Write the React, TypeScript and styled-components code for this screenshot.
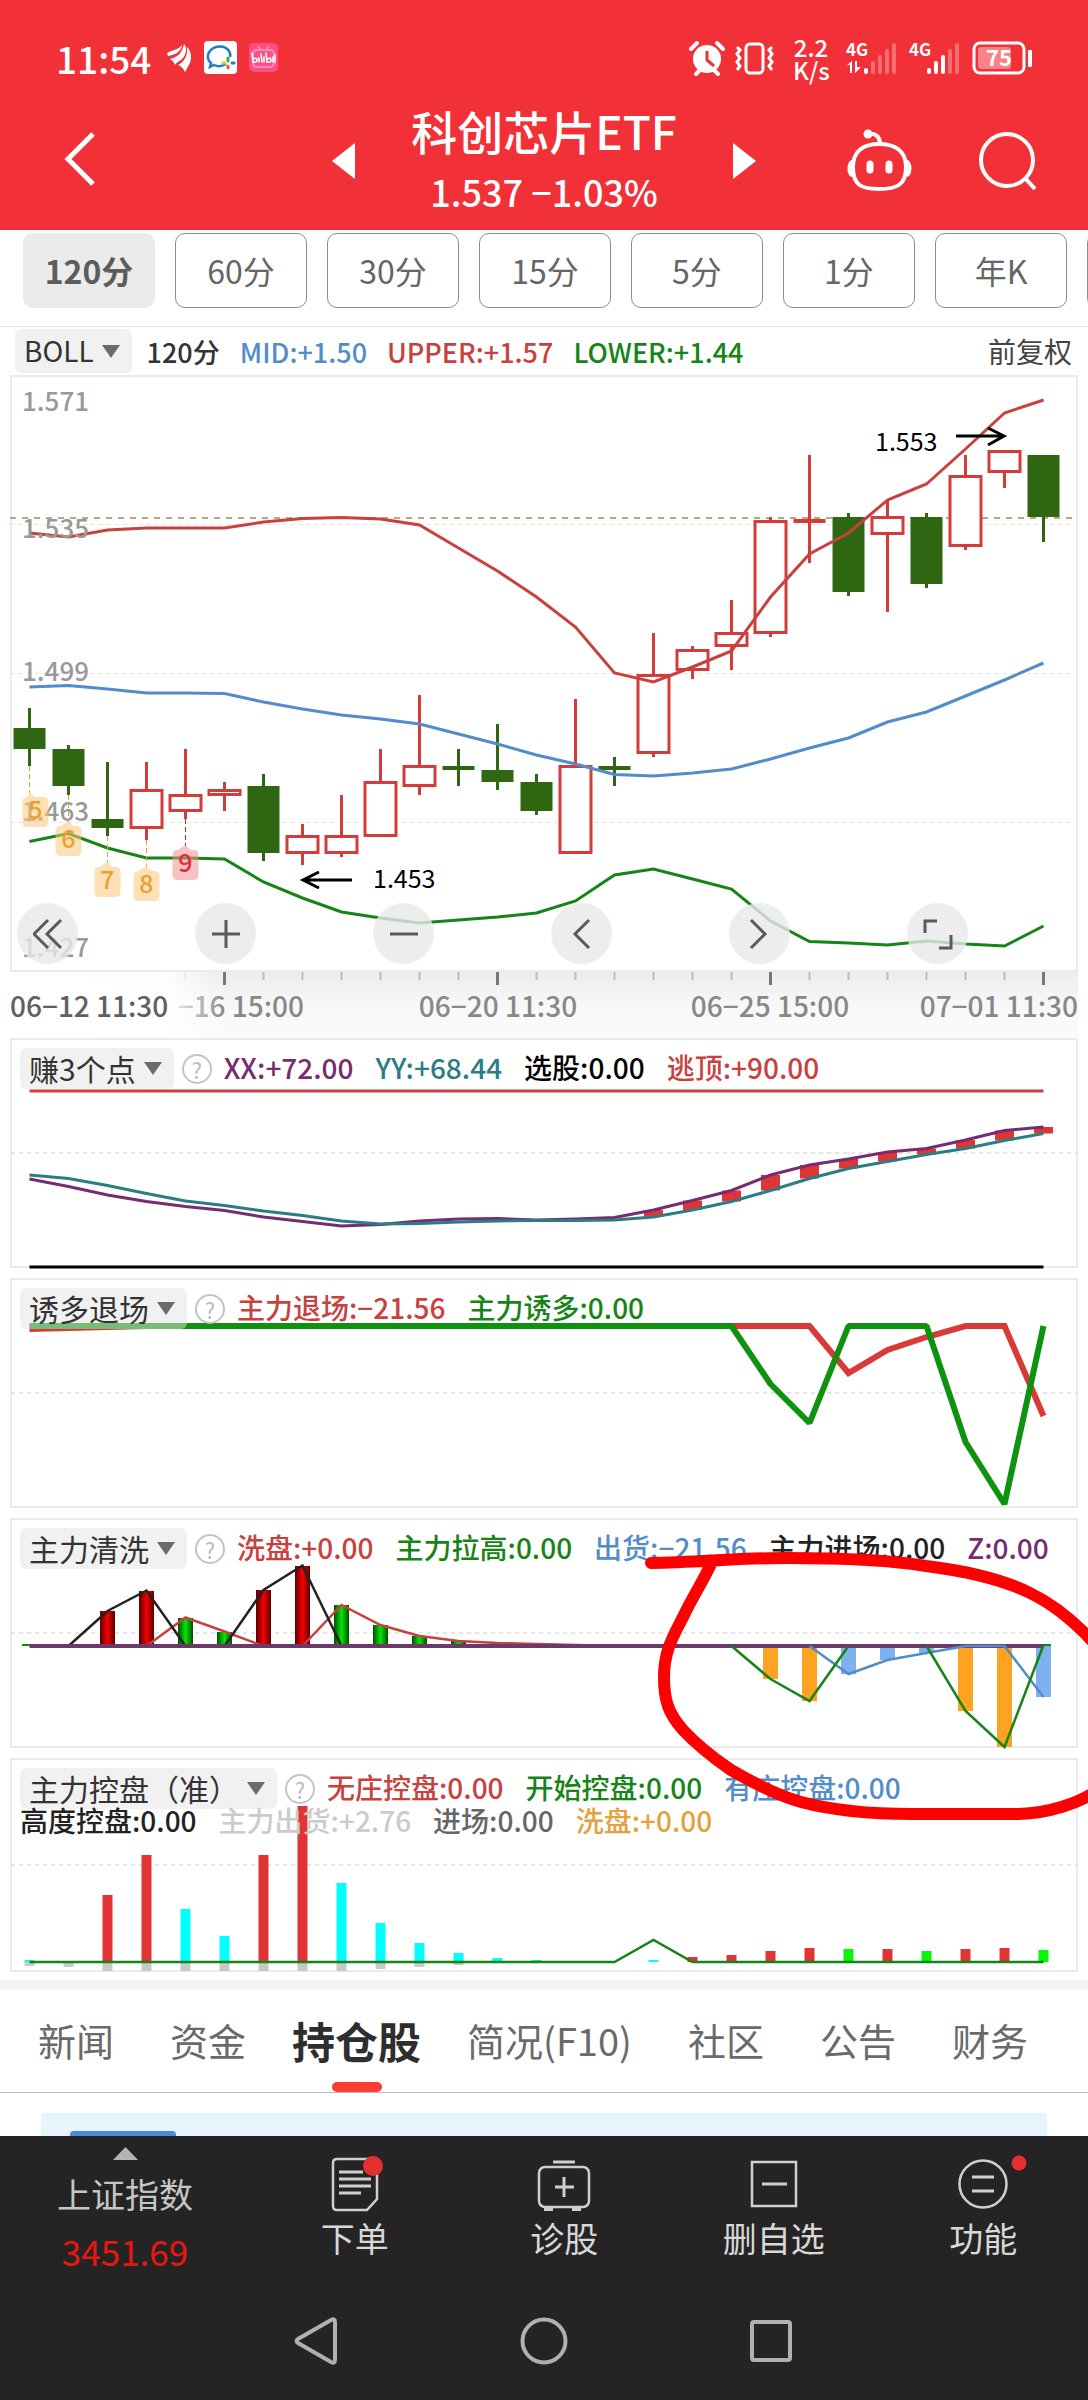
import React from "react";
import styled, { createGlobalStyle } from "styled-components";

const GlobalStyle = createGlobalStyle`
  * { box-sizing: border-box; }
  body {
    margin: 0;
    background: #fff;
    font-family: "Noto Sans CJK SC", "Noto Sans", sans-serif;
    overflow-x: hidden;
  }
  button, select {
    font: inherit;
    color: inherit;
    border: 0;
    margin: 0;
    padding: 0;
    background: none;
  }
  svg { display: block; }
`;

const color = {
  brand: "#f23038",
  red: "#c8413f",
  up: "#d23c3a",
  down: "#2f6612",
  green: "#168416",
  blue: "#528dca",
  purple: "#762c70",
  teal: "#2b7d83",
  orange: "#e5a23c",
  frame: "#ebebeb",
  grid: "#e4e4e4",
  dark: "#242424",
};

/* ---------- header ---------- */

const Header = styled.header`
  background: ${color.brand};
  color: #fff;
`;

const StatusBar = styled.div`
  display: flex;
  justify-content: space-between;
  align-items: center;
  height: 100px;
  padding: 15px 55px 0 56px;
`;

const StatusGroup = styled.div<{ $gap: number }>`
  display: flex;
  align-items: center;
  gap: ${(p) => p.$gap}px;
  svg { overflow: visible; }
`;

const Clock = styled.span`
  font-size: 37px;
  line-height: 40px;
  font-weight: 500;
  margin-right: 4px;
`;

const Speed = styled.span`
  width: 36px;
  margin: 0 6px 0 8px;
  font-size: 24px;
  line-height: 23px;
  font-weight: 500;
  text-align: center;
`;

const NavBar = styled.nav`
  display: grid;
  grid-template-columns: 1fr auto 1fr;
  align-items: center;
  padding: 0 50px 8px;
`;

const IconButton = styled.button`
  display: grid;
  place-items: center;
  cursor: pointer;
`;

const NavStart = styled.div`
  display: flex;
`;

const NavEnd = styled.div`
  display: flex;
  justify-content: flex-end;
  align-items: center;
  gap: 66px;
`;

const Switcher = styled.div`
  display: flex;
  align-items: center;
  gap: 56px;
`;

const TitleBlock = styled.div`
  text-align: center;
`;

const Title = styled.h1`
  margin: 0;
  font-size: 46px;
  line-height: 60px;
  font-weight: 500;
`;

const Quote = styled.div`
  font-size: 36px;
  line-height: 62px;
  font-weight: 500;
`;

/* ---------- periods ---------- */

const Periods = styled.div`
  display: flex;
  gap: 20px;
  padding: 3px 0 18px 23px;
  border-bottom: 1px solid #e2e2e2;
  overflow: hidden;
`;

const Period = styled.button<{ $active?: boolean }>`
  flex: 0 0 132px;
  height: 75px;
  padding-bottom: 2px;
  border: 1px solid ${(p) => (p.$active ? "#ebebeb" : "#8d8d8d")};
  border-radius: 10px;
  background: ${(p) => (p.$active ? "#ebebeb" : "#fff")};
  color: ${(p) => (p.$active ? "#5c5c5c" : "#666")};
  font-size: 32px;
  font-weight: ${(p) => (p.$active ? 700 : 400)};
`;

/* ---------- indicators ---------- */

const IndicatorBar = styled.div`
  display: flex;
  align-items: center;
  height: 48px;
  padding: 0 16px 0 15px;
`;

const Picker = styled.label<{ $tall?: boolean }>`
  display: grid;
  flex: none;
  align-items: center;
  height: ${(p) => (p.$tall ? 44 : 41)}px;
  border-radius: 6px;
  background: rgba(228, 228, 228, 0.5);
  color: #333;
  font-size: ${(p) => (p.$tall ? 28 : 30)}px;
  select {
    grid-area: 1 / 1;
    appearance: none;
    field-sizing: content;
    height: 40px;
    padding: 0 38px 2px 9px;
    line-height: 38px;
    outline: none;
  }
  svg {
    grid-area: 1 / 1;
    justify-self: end;
    margin-right: 12px;
    pointer-events: none;
  }
`;

const Values = styled.div<{ $gap: number }>`
  display: flex;
  flex: 1;
  gap: ${(p) => p.$gap}px;
  font-size: 28px;
  line-height: 35px;
  font-weight: 500;
  white-space: nowrap;
`;

const Value = styled.span<{ $color: string }>`
  color: ${(p) => p.$color};
`;

const Adjust = styled.span`
  color: #444;
  font-size: 28px;
`;

const BollValues = styled(Values)`
  padding-left: 15px;
  font-size: 27px;
`;

/* A bordered chart; the drawing and its legend share one grid cell. */
const Panel = styled.section`
  display: grid;
  margin: 0 10px;
  border: 2px solid ${color.frame};
  > * { grid-area: 1 / 1; min-width: 0; }
`;

const Panels = styled.div`
  position: relative;
  display: grid;
  gap: 10px;
`;

const PanelStack = styled.div`
  display: grid;
  gap: 10px;
`;

const Plot = styled.svg`
  width: 100%;
  height: auto;
  overflow: visible;
`;

const Legend = styled.div`
  z-index: 1;
  padding: 8px 0 0 8px;
`;

const LegendRow = styled.div`
  display: flex;
  align-items: center;
  gap: 8px;
  ${Values} { padding: 0 0 2px 4px; }
`;

const LegendExtra = styled(Values)`
  margin-top: -6px;
`;

const Help = styled.button`
  flex: none;
  width: 30px;
  height: 30px;
  border: 2px solid #c4c4c4;
  border-radius: 50%;
  color: #bdbdbd;
  font-size: 22px;
  line-height: 24px;
  text-align: center;
`;

const ChartTools = styled.div`
  z-index: 1;
  align-self: end;
  display: grid;
  grid-template-columns: repeat(6, 1fr);
  margin: 0 -2px 6px;
`;

const ToolButton = styled.button`
  display: grid;
  place-items: center;
  width: 61px;
  height: 61px;
  margin-left: 7px;
  border-radius: 50%;
  background: rgba(232, 232, 232, 0.8);
`;

const Axis = styled.div`
  margin: 0 10px;
  background: linear-gradient(#ececec, #f8f8f8 50%, #fbfbfb);
`;

const Annotation = styled.svg`
  position: absolute;
  inset: 0;
  width: 100%;
  height: 100%;
  z-index: 2;
  pointer-events: none;
`;

/* ---------- tabs ---------- */

const Tabs = styled.div`
  display: flex;
  margin-top: 8px;
  padding-left: 10px;
  height: 113px;
  border-top: 10px solid #f4f4f4;
  border-bottom: 1px solid #bcbcbc;
  overflow: hidden;
`;

const Tab = styled.button<{ $active?: boolean }>`
  display: grid;
  flex: none;
  grid-template-rows: 1fr 10px;
  place-items: center;
  padding: 0 ${(p) => (p.$active ? 18 : 28)}px;
  color: ${(p) => (p.$active ? "#2e2e2e" : "#6a6a6a")};
  font-size: ${(p) => (p.$active ? 43 : 38)}px;
  line-height: 60px;
  font-weight: ${(p) => (p.$active ? 700 : 400)};
  span { padding-top: 7px; }
  &::after {
    content: "";
    width: 50px;
    height: 10px;
    border-radius: 5px;
    background: ${(p) => (p.$active ? "#fa3c33" : "transparent")};
  }
`;

const Peek = styled.div`
  padding: 20px 41px 0;
`;

const PeekCard = styled.div`
  height: 23px;
  padding: 18px 29px 0;
  border-radius: 3px 3px 0 0;
  background: #e6f4fe;
`;

const PeekTag = styled.div`
  width: 106px;
  height: 5px;
  border-radius: 4px 4px 0 0;
  background: #4a8bd6;
`;

/* ---------- bottom ---------- */

const Footer = styled.footer`
  background: ${color.dark};
`;

const Actions = styled.div`
  display: grid;
  grid-template-columns: 250px repeat(4, 1fr);
  height: 146px;
`;

const IndexButton = styled.button`
  display: flex;
  flex-direction: column;
  align-items: center;
  padding-top: 11px;
  color: #c6c6c6;
  font-size: 34px;
  line-height: 60px;
  svg { margin-bottom: 4px; }
`;

const IndexValue = styled.span`
  color: #e8170f;
  font-size: 35px;
  line-height: 54px;
`;

const Action = styled.button`
  display: flex;
  flex-direction: column;
  align-items: center;
  padding-top: 19px;
  color: #d8d8d8;
  font-size: 34px;
  line-height: 50px;
  svg { overflow: visible; }
`;

const SystemNav = styled.div`
  display: flex;
  justify-content: center;
  align-items: center;
  gap: 179px;
  height: 118px;
`;

/* ---------- data ---------- */

const FIRST_X = 29.5;
const STEP = 39;
const px = (i: number) => FIRST_X + STEP * i;
const points = (ys: number[], from = 0) =>
  ys.map((y, i) => `${px(i + from)},${y}`).join(" ");

type Candle = ["u" | "d", number, number, number, number];
const candles: Candle[] = [
  ["d", 708, 728, 749, 766], ["d", 745, 749, 786, 795], ["d", 762, 819, 828, 836],
  ["u", 762, 789, 829, 840], ["u", 749, 794, 812, 819], ["u", 782, 789, 796, 811],
  ["d", 774, 786, 853, 861], ["u", 824, 835, 854, 865], ["u", 795, 835, 854, 857],
  ["u", 749, 781, 837, 837], ["u", 695, 765, 787, 795], ["d", 749, 766, 770, 786],
  ["d", 724, 770, 782, 790], ["d", 774, 782, 811, 815], ["u", 699, 765, 854, 854],
  ["d", 757, 766, 770, 786], ["u", 633, 674, 754, 757], ["u", 646, 649, 671, 679],
  ["u", 600, 632, 647, 670], ["u", 517, 520, 634, 637], ["u", 455, 519, 523, 563],
  ["d", 513, 517, 592, 596], ["u", 500, 516, 535, 612], ["d", 513, 517, 584, 588],
  ["u", 455, 475, 547, 550], ["u", 450, 450, 473, 488], ["d", 455, 455, 517, 542],
];

const upper = [533, 537, 530, 528, 528, 528, 522, 518.5, 517.5, 519, 525, 548, 571, 597, 627, 673, 682, 667, 651, 597, 554, 533, 500, 484, 449, 413, 400];
const mid = [687, 685.5, 689, 693, 693, 693.5, 702, 709, 715, 719, 724, 734, 744, 755, 764, 774.5, 776, 773, 769, 759, 748, 738, 722, 712, 696, 680, 663];
const lower = [841.5, 833.5, 848, 858, 858, 859, 882, 898, 912, 918, 923, 920, 917, 913, 901, 875, 869, 879, 889, 921, 941.5, 943, 945, 941, 944, 946, 926];

const priceLabels: [string, number][] = [["1.571", 411], ["1.535", 538], ["1.499", 681], ["1.463", 821], ["1.427", 957]];
const countBadges: [string, number, number, number][] = [["5", 0, 797, 6], ["6", 1, 826, 0], ["7", 2, 867, 0], ["8", 3, 871, 0], ["9", 4, 850, 0]];

const xx = [1179, 1186.5, 1195, 1201.5, 1206.5, 1210.5, 1217, 1221.5, 1226, 1224.5, 1221, 1219, 1218.5, 1220, 1219, 1217.5, 1210, 1200.5, 1190.5, 1175, 1165, 1159, 1152, 1148.5, 1140, 1130.5, 1127];
const yy = [1175, 1178.5, 1185.5, 1193.5, 1201, 1205.5, 1211, 1215.5, 1221, 1224, 1223.5, 1222, 1221, 1220.5, 1220.5, 1220, 1217, 1210, 1201.5, 1190.5, 1178.5, 1168.5, 1161.5, 1154.5, 1148.5, 1140.5, 1133.5];

const washBars: [number, number, "r" | "g"][] = [
  [2, 1611, "r"], [3, 1591, "r"], [4, 1618, "g"], [5, 1632, "g"], [6, 1590, "r"],
  [7, 1566, "r"], [8, 1605, "g"], [9, 1625, "g"], [10, 1636, "g"], [11, 1641, "g"],
];
const shipBars: [number, number, string][] = [
  [19, 1679, "#fda321"], [20, 1701, "#fda321"], [24, 1711, "#fda321"], [25, 1747, "#fda321"],
  [21, 1674, "#7fb1f0"], [22, 1660, "#7fb1f0"], [23, 1653, "#7fb1f0"], [26, 1697, "#7fb1f0"],
];

const R = "#e23434", C = "#00ffff", G = "#06f806";
const controlBars: [number, number, string][] = [
  [0, 1960, C], [2, 1895, R], [3, 1855, R], [4, 1909, C], [5, 1936, C], [6, 1855, R], [7, 1806, R],
  [8, 1883, C], [9, 1923, C], [10, 1943, C], [11, 1953, C], [12, 1958, C], [13, 1960, C], [16, 1960, C],
  [17, 1957, R], [18, 1955, R], [19, 1951, R], [20, 1948, R], [21, 1949, G], [22, 1949, R],
  [23, 1951, G], [24, 1949, R], [25, 1948, R], [26, 1950, G],
];
const greyBars = [1966, 1967, 1971, 1971, 1971, 1971, 1971, 1971, 1971, 1969, 1967, 1965];

/* ---------- parts ---------- */

const GridLine = ({ y, w = 2 }: { y: number; w?: number }) => (
  <line x1="11" x2="1077" y1={y} y2={y} stroke={color.grid} strokeWidth={w} strokeDasharray="4 4" />
);

const Series = ({ ys, stroke, w = 3, from = 0 }: { ys: number[]; stroke: string; w?: number; from?: number }) => (
  <polyline points={points(ys, from)} fill="none" stroke={stroke} strokeWidth={w} />
);

const IndicatorPicker = ({ value, label, tall }: { value: string; label: string; tall?: boolean }) => (
  <Picker $tall={tall}>
    <select aria-label={label} defaultValue={value}>
      <option>{value}</option>
    </select>
    <svg width="18" height="13" viewBox="0 0 18 13"><path d="M0 0H18L9 13Z" fill="#6b6b6b" /></svg>
  </Picker>
);

type Item = [string, string];
const Items = ({ items }: { items: Item[] }) => (
  <>{items.map(([t, c]) => <Value key={t} $color={c}>{t}</Value>)}</>
);

const PanelLegend = ({ name, items, extra }: { name: string; items: Item[]; extra?: Item[] }) => (
  <Legend>
    <LegendRow>
      <IndicatorPicker value={name} label="指标" />
      <Help>?</Help>
      <Values $gap={22}><Items items={items} /></Values>
    </LegendRow>
    {extra && <LegendExtra $gap={22}><Items items={extra} /></LegendExtra>}
  </Legend>
);

const Signal = ({ level, data }: { level: number; data?: boolean }) => (
  <svg width="52" height="34" viewBox="0 0 52 34" fill="#fff">
    <text x="0" y="15" fontSize="17" fontWeight="700">4G</text>
    {data && (
      <path d="M4 32V24H1L6 20V32ZM9 20V32L15 26H11V20Z" />
    )}
    {[0, 1, 2, 3, 4].map((i) => (
      <rect key={i} x={18 + i * 7} y={[27, 20, 14, 8, 2][i]} width="4" height={[6, 13, 19, 25, 31][i]} rx="2" opacity={i < level ? 1 : 0.3} />
    ))}
  </svg>
);

const StatusIcons = () => (
  <StatusGroup $gap={11}>
    <svg width="34" height="34" viewBox="0 0 34 34" fill="#fff">
      <circle cx="17" cy="18" r="14" />
      <path d="M1 8 7 2M33 8 27 2M6 33l4-4M28 33l-4-4" stroke="#fff" strokeWidth="4" strokeLinecap="round" />
      <path d="M17 10v9l7 6" fill="none" stroke={color.brand} strokeWidth="3" />
    </svg>
    <svg width="39" height="34" viewBox="0 0 39 34" fill="none" stroke="#fff" strokeWidth="3">
      <rect x="11" y="3" width="17" height="29" rx="4" />
      <path d="M2 6l3 3-3 4 3 4-3 4 3 4-3 4M37 6l-3 3 3 4-3 4 3 4-3 4 3 4" />
    </svg>
    <Speed>2.2 K/s</Speed>
    <Signal level={1} data />
    <Signal level={3} />
    <svg width="61" height="34" viewBox="0 0 61 34">
      <rect x="2" y="2" width="50" height="30" rx="6" fill="none" stroke="#fff" strokeWidth="3" />
      <rect x="6" y="6" width="33" height="22" rx="3" fill="#fff" opacity=".4" />
      <rect x="56" y="9" width="4" height="17" rx="1" fill="#fff" />
      <text x="27" y="25" fontSize="22" fontWeight="700" fill="#fff" textAnchor="middle">75</text>
    </svg>
  </StatusGroup>
);

const AppBadges = () => (
  <>
    <svg width="25" height="28" viewBox="0 0 25 28" fill="#fff">
      <path d="M0 9C5 6 11 6 15 1 15 7 8 11 1 12ZM3 15C11 13 15 9 17 0 21 4 19 12 14 16 11 18 9 19 8 21 7 18 5 16 3 15ZM11 21C17 18 21 12 20 3 24 7 25 13 23 19 21 22 20 25 18 28 16 24 14 22 11 21Z" />
    </svg>
    <svg width="33" height="33" viewBox="0 0 33 33">
      <rect width="33" height="33" rx="4" fill="#fff" />
      <path d="M22 23C17 26 12 25 10 24L6 26 7 22C3 19 3 13 6 10 11 4 21 4 25 10 26 12 27 14 26 16" fill="none" stroke="#1f7fc4" strokeWidth="2.5" />
      <path d="M24 17v3" stroke="#4aa33a" strokeWidth="3" strokeLinecap="round" />
      <path d="M28 22h2" stroke="#2277c9" strokeWidth="3" strokeLinecap="round" />
      <path d="M24 25v2" stroke="#e0662c" strokeWidth="3" strokeLinecap="round" />
      <path d="M19 22h2" stroke="#e9c231" strokeWidth="3" strokeLinecap="round" />
    </svg>
    <svg width="29" height="29" viewBox="0 0 29 29">
      <rect width="29" height="29" rx="5" fill="#ff4d86" />
      <g fill="none" stroke="#ff8fb3" strokeWidth="2"><rect x="4" y="7" width="21" height="17" rx="4" /><path d="M9 3l3 4M20 3l-3 4" /></g>
      <g fill="none" stroke="#fff" strokeWidth="1.6" strokeLinecap="round">
        <path d="M3 10l1 9q4 1 4-2t-4-1M10 15v4M12 11l1 8M15 14v5M17 10l1 9q4 1 4-2t-4-1M24 14v5M26 12v7" />
      </g>
    </svg>
  </>
);

const MainChart = () => (
  <Plot viewBox="12 377 1064 593" role="img" aria-label="BOLL 120分">
    <GridLine y={524.5} w={1} />
    <GridLine y={673.5} w={1} />
    <GridLine y={822.5} w={1} />
    <line x1="10" x2="1074" y1="518" y2="518" stroke="#b9a97c" strokeWidth="2" strokeDasharray="6 6" />
    {candles.map(([dir, high, top, bottom, low], i) => {
      const x = px(i);
      const c = dir === "u" ? color.up : color.down;
      return (
        <g key={i} stroke={c} strokeWidth="3">
          {high < top && <line x1={x} x2={x} y1={high} y2={top} />}
          {low > bottom && <line x1={x} x2={x} y1={bottom} y2={low} />}
          {dir === "d" || bottom - top < 5 ? (
            <rect x={x - 16} y={top} width="32" height={bottom - top} fill={c} stroke="none" />
          ) : (
            <rect x={x - 15.5} y={top + 1.5} width="31" height={bottom - top - 3} fill="#fff" />
          )}
        </g>
      );
    })}
    <Series ys={upper} stroke={color.red} />
    <Series ys={mid} stroke={color.blue} />
    <Series ys={lower} stroke={color.green} />
    {priceLabels.map(([t, y]) => (
      <text key={t} x="22" y={y} fontSize="26" fontWeight="500" fill="#999">{t}</text>
    ))}
    {countBadges.map(([t, i, y, shift]) => {
      const hot = t === "9";
      const x = px(i);
      const c = x + shift;
      return (
        <g key={t}>
          <line x1={x} x2={x} y1={candles[i][4]} y2={y - 4} stroke={hot ? "#a03030" : color.orange} strokeDasharray="5 3" />
          <path d={`M${c - 8} ${y}L${x} ${y - 5}L${x + 5} ${y}H${c + 8}q5 0 5 5v20q0 5-5 5h-16q-5 0-5-5v-20q0-5 5-5Z`} fill={hot ? "#f08f92" : "#fbc679"} opacity=".55" />
          <text x={c} y={y + 22} fontSize="25" fontWeight="500" textAnchor="middle" fill={hot ? "#dc3135" : "#eda02c"}>{t}</text>
        </g>
      );
    })}
    <g fill="none" stroke="#000" strokeWidth="3">
      <path d="M956 436h48M988 428l16 8-16 9" />
      <path d="M352 880h-49M319 872l-16 8 16 8" />
    </g>
    <text x="875" y="451" fontSize="25">1.553</text>
    <text x="373" y="888" fontSize="25">1.453</text>
  </Plot>
);

const toolPaths: [string, string][] = [
  ["更早", "M28 2L14 16 28 30M15 2L1 16 15 30"],
  ["放大", "M15 2V30M1 16H29"],
  ["缩小", "M1 16H29"],
  ["左移", "M22 2L8 16 22 30"],
  ["右移", "M6 2L20 16 6 30"],
  ["全屏", "M2 15V3H14M28 17V30H16"],
];

const majorTicks = [5, 12, 19, 26];

const TimeAxis = () => (
  <Axis>
    <Plot viewBox="10 972 1068 66" role="img" aria-label="时间轴">
      <defs>
        <linearGradient id="axisFade" x1="0" x2="1" y1="0" y2="0">
          <stop offset="0" stopColor="#fff" />
          <stop offset=".72" stopColor="#fff" stopOpacity=".95" />
          <stop offset="1" stopColor="#fff" stopOpacity="0" />
        </linearGradient>
      </defs>
      {Array.from({ length: 23 }, (_, k) => k + 4).map((i) => {
        const major = majorTicks.includes(i);
        return <line key={i} x1={px(i)} x2={px(i)} y1="972" y2={major ? 985 : 980} stroke={major ? "#777" : "#bbb"} strokeWidth={major ? 3 : 2} />;
      })}
      <g fontSize="28" fontWeight="500" fill="#888">
        <text x="304" y="1017" textAnchor="end">−16 15:00</text>
        <text x="498" y="1017" textAnchor="middle">06−20 11:30</text>
        <text x="770" y="1017" textAnchor="middle">06−25 15:00</text>
        <text x="1078" y="1017" textAnchor="end">07−01 11:30</text>
        <rect x="10" y="972" width="215" height="66" fill="url(#axisFade)" />
        <text x="10" y="1017" fill="#606060">06−12 11:30</text>
      </g>
    </Plot>
  </Axis>
);

const flat = (y: number, n: number) => Array<number>(n).fill(y);

const EarnPlot = () => (
  <Plot viewBox="12 1040 1064 226">
    <GridLine y={1153} />
    {xx.map((y, i) => i > 15 && <rect key={i} x={px(i) - 9.5} y={y} width="19" height={yy[i] - y} fill={R} />)}
    <Series ys={flat(1091, 27)} stroke={color.red} />
    <Series ys={xx} stroke={color.purple} />
    <Series ys={yy} stroke={color.teal} />
    <Series ys={flat(1267, 27)} stroke="#000" />
  </Plot>
);

const LurePlot = () => (
  <Plot viewBox="12 1280 1064 226">
    <GridLine y={1393} />
    <Series ys={[1329, 1328, 1327, ...flat(1326, 18), 1373, 1350, 1337, 1326, 1326, 1416]} stroke="#d93a38" w={6} />
    <polyline points={points([...flat(1326, 19), 1384, 1423, 1326, 1326, 1326, 1442, 1504, 1326])} fill="none" stroke="#0f920f" strokeWidth="6" strokeLinejoin="bevel" />
  </Plot>
);

const WashPlot = () => (
  <Plot viewBox="12 1520 1064 226">
    <defs>
      <linearGradient id="barRed"><stop offset="0" stopColor="#5a0000" /><stop offset=".5" stopColor="#f40000" /><stop offset="1" stopColor="#5a0000" /></linearGradient>
      <linearGradient id="barGreen"><stop offset="0" stopColor="#034d03" /><stop offset=".5" stopColor="#05e605" /><stop offset="1" stopColor="#034d03" /></linearGradient>
    </defs>
    <GridLine y={1633} />
    {washBars.map(([i, y, c]) => (
      <rect key={i} x={px(i) - 7.5} y={y} width="15" height={1645 - y} fill={c === "r" ? "url(#barRed)" : "url(#barGreen)"} />
    ))}
    {shipBars.map(([i, y, c]) => <rect key={i} x={px(i) - 7.5} y="1646" width="15" height={y - 1646} fill={c} />)}
    <Series ys={[1646, 1617.5, 1631.5, 1646, 1646, 1605, 1625, 1636, 1641, 1643, 1644, 1645, 1646]} from={3} stroke={color.red} w={2.5} />
    <Series ys={[1646, 1611, 1590.5, 1646, 1646, 1590, 1565.5, 1646]} from={1} stroke="#222" w={2.5} />
    <path d="M22 1645H36M1036 1645H1051" stroke={color.green} strokeWidth="2" />
    <Series ys={flat(1646, 27)} stroke="#6b3a68" w={4} />
    <Series ys={[1646, 1674, 1660, 1653, 1646, 1646, 1697]} from={20} stroke={color.blue} w={2.5} />
    <Series ys={[1646, 1679, 1701, 1646]} from={18} stroke={color.green} w={2.5} />
    <Series ys={[1646, 1711, 1747, 1645]} from={23} stroke={color.green} w={2.5} />
  </Plot>
);

const ControlPlot = () => (
  <Plot viewBox="12 1760 1064 210">
    <GridLine y={1865} />
    {greyBars.map((y, i) => <rect key={i} x={px(i) - 5} y="1961" width="10" height={y - 1961} fill="#c9c9c9" />)}
    {controlBars.map(([i, y, c]) => <rect key={i} x={px(i) - 5} y={y} width="10" height={1962 - y} fill={c} />)}
    <Series ys={[...flat(1962, 16), 1940, ...flat(1962, 10)]} stroke={color.green} w={2.5} />
  </Plot>
);

const HandCircle = () => (
  <Annotation viewBox="0 1518 1088 454" preserveAspectRatio="none">
    <path
      d="M651 1563C700 1562 740 1558 787 1558C840 1558 890 1560 926 1566C965 1571 1000 1578 1030 1593C1055 1605 1075 1622 1095 1644M1095 1792C1078 1803 1050 1813 1019 1814H912C880 1814 835 1811 801 1802C780 1796 755 1784 731 1770C712 1757 697 1745 683 1730C668 1713 664 1700 664 1677C664 1650 674 1635 683 1617C693 1596 702 1583 711 1564"
      fill="none" stroke="#ff0000" strokeWidth="12" strokeLinecap="round" strokeLinejoin="round"
    />
  </Annotation>
);

const periods = ["120分", "60分", "30分", "15分", "5分", "1分", "年K"];
const tabs = ["新闻", "资金", "持仓股", "简况(F10)", "社区", "公告", "财务"];

export default function App() {
  return (
    <>
      <GlobalStyle />
      <Header>
        <StatusBar>
          <StatusGroup $gap={12}>
            <Clock>11:54</Clock>
            <AppBadges />
          </StatusGroup>
          <StatusIcons />
        </StatusBar>
        <NavBar>
          <NavStart>
            <IconButton aria-label="返回">
              <svg width="60" height="60" viewBox="0 0 60 60"><path d="M43 3L18 28 43 53" fill="none" stroke="#fff" strokeWidth="5" /></svg>
            </IconButton>
          </NavStart>
          <Switcher>
            <IconButton aria-label="上一只">
              <svg width="23" height="36" viewBox="0 0 23 36"><path d="M23 0V36L0 18Z" fill="#fff" /></svg>
            </IconButton>
            <TitleBlock>
              <Title>科创芯片ETF</Title>
              <Quote>1.537 −1.03%</Quote>
            </TitleBlock>
            <IconButton aria-label="下一只">
              <svg width="23" height="36" viewBox="0 0 23 36"><path d="M0 0V36L23 18Z" fill="#fff" /></svg>
            </IconButton>
          </Switcher>
          <NavEnd>
            <IconButton aria-label="智能助手">
              <svg width="67" height="64" viewBox="0 0 67 64" fill="none" stroke="#fff" strokeWidth="4">
                <path d="M33 15C48 15 60 21 60 38 60 56 51 60 33 60S7 56 7 38C7 21 19 15 33 15Z" />
                <path d="M23 5C30 4 34 8 34 15" />
                <circle cx="22" cy="5" r="4.500" fill="#fff" stroke="none" />
                <path d="M6 31C0 32 0 47 6 48ZM61 31C67 32 67 47 61 48Z" fill="#fff" stroke="none" />
                <path d="M24 35v6M43 35v6" strokeWidth="7" strokeLinecap="round" />
              </svg>
            </IconButton>
            <IconButton aria-label="搜索">
              <svg width="59" height="60" viewBox="0 0 59 60" fill="none" stroke="#fff" strokeWidth="4">
                <circle cx="28" cy="29" r="26" /><path d="M46 47L56 58" />
              </svg>
            </IconButton>
          </NavEnd>
        </NavBar>
      </Header>

      <Periods>
        {periods.map((p, i) => <Period key={p} $active={i === 0}>{p}</Period>)}
        <Period aria-label="更多" />
      </Periods>

      <IndicatorBar>
        <IndicatorPicker value="BOLL" label="主图指标" tall />
        <BollValues $gap={20}>
          <Items items={[["120分", "#333"], ["MID:+1.50", color.blue], ["UPPER:+1.57", color.red], ["LOWER:+1.44", color.green]]} />
        </BollValues>
        <Adjust>前复权</Adjust>
      </IndicatorBar>

      <Panel>
        <MainChart />
        <ChartTools>
          {toolPaths.map(([name, d]) => (
            <ToolButton key={name} aria-label={name}>
              <svg width="30" height="32" viewBox="0 0 30 32"><path d={d} fill="none" stroke="#5a5a5a" strokeWidth="3" /></svg>
            </ToolButton>
          ))}
        </ChartTools>
      </Panel>
      <TimeAxis />

      <PanelStack>
        <Panel>
          <EarnPlot />
          <PanelLegend name="赚3个点" items={[["XX:+72.00", color.purple], ["YY:+68.44", color.teal], ["选股:0.00", "#000"], ["逃顶:+90.00", color.red]]} />
        </Panel>
        <Panel>
          <LurePlot />
          <PanelLegend name="诱多退场" items={[["主力退场:−21.56", color.red], ["主力诱多:0.00", color.green]]} />
        </Panel>
        <Panels>
          <Panel>
            <WashPlot />
            <PanelLegend name="主力清洗" items={[["洗盘:+0.00", color.red], ["主力拉高:0.00", color.green], ["出货:−21.56", color.blue], ["主力进场:0.00", "#222"], ["Z:0.00", color.purple]]} />
          </Panel>
          <Panel>
            <ControlPlot />
            <PanelLegend
              name="主力控盘（准）"
              items={[["无庄控盘:0.00", color.red], ["开始控盘:0.00", color.green], ["有庄控盘:0.00", color.blue]]}
              extra={[["高度控盘:0.00", "#222"], ["主力出货:+2.76", "#cbcbcb"], ["进场:0.00", "#666"], ["洗盘:+0.00", color.orange]]}
            />
          </Panel>
          <HandCircle />
        </Panels>
      </PanelStack>

      <Tabs>
        {tabs.map((t) => <Tab key={t} $active={t === "持仓股"}><span>{t}</span></Tab>)}
      </Tabs>
      <Peek><PeekCard><PeekTag /></PeekCard></Peek>

      <Footer>
        <Actions>
          <IndexButton>
            <svg width="25" height="13" viewBox="0 0 25 13"><path d="M12.500 0L25 13H0Z" fill="#b4b4b4" /></svg>
            上证指数
            <IndexValue>3451.69</IndexValue>
          </IndexButton>
          <Action>
            <svg width="48" height="58" viewBox="0 0 48 58" fill="none" stroke="#cfcfcf" strokeWidth="2.500">
              <path d="M6 4H46V44L36 55H6Q2 55 2 51V8Q2 4 6 4Z" />
              <path d="M8 17H32M8 24H40M8 31H40M8 38H30" strokeWidth="3" />
              <circle cx="42" cy="11" r="10" fill="#e5302f" stroke="none" />
            </svg>
            下单
          </Action>
          <Action>
            <svg width="54" height="58" viewBox="0 0 54 58" fill="none" stroke="#cfcfcf" strokeWidth="2.500">
              <rect x="2" y="12" width="50" height="40" rx="6" />
              <path d="M16 7H38M27 22V42M18 32H37" strokeWidth="3" />
              <path d="M7 54H16M35 54H44" strokeWidth="4" />
            </svg>
            诊股
          </Action>
          <Action>
            <svg width="48" height="58" viewBox="0 0 48 58" fill="none" stroke="#cfcfcf" strokeWidth="2.500">
              <rect x="2" y="7" width="44" height="44" />
              <path d="M12 29H37" strokeWidth="3" />
            </svg>
            删自选
          </Action>
          <Action>
            <svg width="50" height="58" viewBox="0 0 50 58" fill="none" stroke="#cfcfcf" strokeWidth="2.500">
              <circle cx="25" cy="29" r="23.500" />
              <path d="M14 22H36M14 36H36" strokeWidth="3" />
              <circle cx="61" cy="8" r="7.500" fill="#e5302f" stroke="none" />
            </svg>
            功能
          </Action>
        </Actions>
        <SystemNav>
          <IconButton aria-label="后退">
            <svg width="48" height="48" viewBox="0 0 48 48"><path d="M38 3Q42 1 42 5V43Q42 47 38 45L5 26Q2 24 5 22Z" fill="none" stroke="#b0b0b0" strokeWidth="4" /></svg>
          </IconButton>
          <IconButton aria-label="主屏幕">
            <svg width="48" height="48" viewBox="0 0 48 48"><circle cx="24" cy="24" r="21.500" fill="none" stroke="#b0b0b0" strokeWidth="4" /></svg>
          </IconButton>
          <IconButton aria-label="最近任务">
            <svg width="48" height="48" viewBox="0 0 48 48"><rect x="5" y="5" width="38" height="38" rx="2" fill="none" stroke="#b0b0b0" strokeWidth="4" /></svg>
          </IconButton>
        </SystemNav>
      </Footer>
    </>
  );
}
